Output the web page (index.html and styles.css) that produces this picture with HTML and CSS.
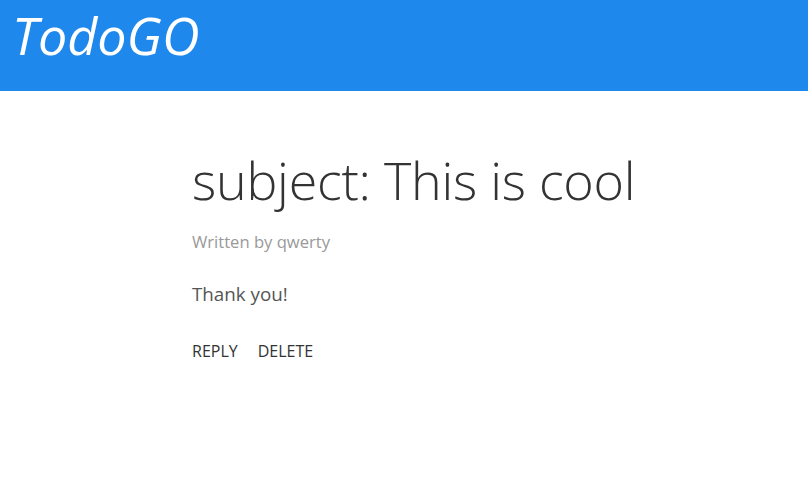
FILE: index.html
```html
<!DOCTYPE html>
<html>
<head>
<meta charset="utf-8">
<title>TodoGO</title>
<link rel="stylesheet" href="styles.css">
</head>
<body>
<header class="topbar">
  <div class="brand">TodoGO</div>
</header>
<main class="content">
  <h1 class="subject">subject: This is cool</h1>
  <p class="author">Written by qwerty</p>
  <p class="message">Thank you!</p>
  <div class="actions">
    <a class="action" href="#">REPLY</a>
    <a class="action" href="#">DELETE</a>
  </div>
</main>
</body>
</html>
```
FILE: styles.css
```css
html, body {
  margin: 0;
  padding: 0;
  background: #ffffff;
  font-family: "Open Sans", "Noto Sans", sans-serif;
}
.topbar {
  background: #1e88ec;
  height: 91px;
  box-sizing: border-box;
  padding: 0 12px;
}
.brand {
  color: #ffffff;
  font-style: italic;
  font-size: 52px;
  line-height: 70px;
}
.content {
  padding: 53px 0 0 192px;
}
.subject {
  margin: 0;
  font-weight: 300;
  font-size: 52px;
  line-height: 72px;
  color: #333333;
  letter-spacing: -0.25px;
}
.author {
  margin: 15px 0 0;
  font-size: 16.6px;
  line-height: 22px;
  color: #999999;
}
.message {
  margin: 29px 0 0;
  font-size: 18.8px;
  line-height: 24px;
  color: #555555;
}
.actions {
  display: flex;
  gap: 20px;
  margin-top: 34px;
}
.action {
  color: #333333;
  text-decoration: none;
  font-size: 16px;
  line-height: 22px;
}
```
